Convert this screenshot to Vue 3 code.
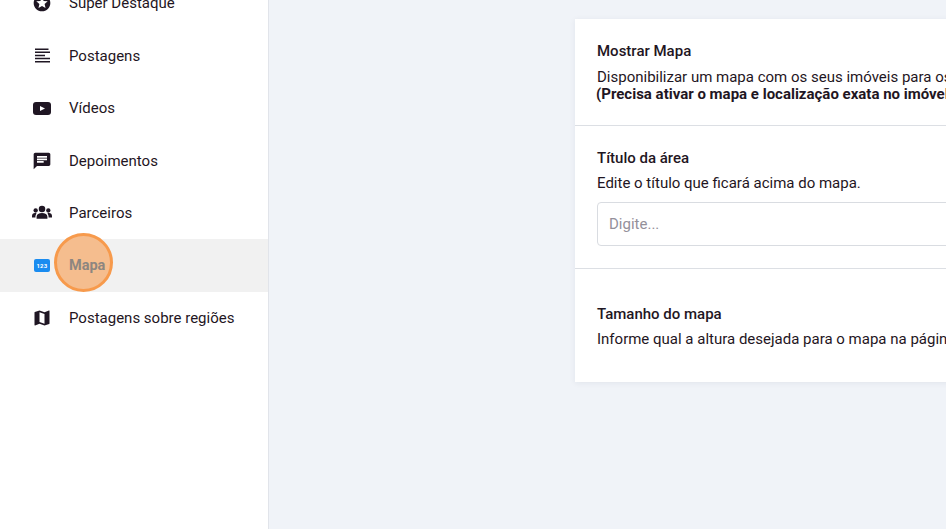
<script setup>
const menu = [
  { label: 'Super Destaque', icon: 'star' },
  { label: 'Postagens', icon: 'notes' },
  { label: 'Vídeos', icon: 'video' },
  { label: 'Depoimentos', icon: 'chat' },
  { label: 'Parceiros', icon: 'users' },
  { label: 'Mapa', icon: 'numbers', active: true },
  { label: 'Postagens sobre regiões', icon: 'map' },
]
</script>

<template>
  <div class="page">
    <aside class="sidebar">
      <ul class="menu">
        <li v-for="item in menu" :key="item.label" class="menu-item" :class="{ active: item.active }">
          <span class="menu-icon">
            <svg v-if="item.icon === 'star'" viewBox="0 0 24 24" width="20" height="20">
              <path d="M11.99 2C6.47 2 2 6.48 2 12s4.47 10 9.99 10C17.52 22 22 17.52 22 12S17.52 2 11.99 2zm4.24 16L12 15.45 7.77 18l1.12-4.81-3.73-3.23 4.92-.42L12 5l1.92 4.53 4.92.42-3.73 3.23L16.23 18z" />
            </svg>
            <svg v-else-if="item.icon === 'notes'" viewBox="0 0 15 15" width="15" height="15">
              <path d="M0 .5h13.500V2H0zM0 3.600h15v1.500H0zM0 6.700h10v1.500H0zM0 9.800h15v1.500H0zM0 12.900h15v1.500H0z" />
            </svg>
            <svg v-else-if="item.icon === 'video'" viewBox="0 0 18 13" width="18" height="13">
              <path d="M3 0h12a3 3 0 0 1 3 3v7a3 3 0 0 1-3 3H3a3 3 0 0 1-3-3V3a3 3 0 0 1 3-3z" />
              <path d="M7 4l5 2.500L7 9z" fill="#fff" />
            </svg>
            <svg v-else-if="item.icon === 'chat'" viewBox="0 0 24 24" width="20" height="20">
              <path d="M20 2H4c-1.100 0-1.990.9-1.990 2L2 22l4-4h14c1.100 0 2-.9 2-2V4c0-1.100-.9-2-2-2zm-6 12H6v-2h8v2zm4-3H6V9h12v2zm0-3H6V6h12v2z" />
            </svg>
            <svg v-else-if="item.icon === 'users'" viewBox="0 0 24 24" width="20" height="20">
              <circle cx="12" cy="7.200" r="3.900" />
              <circle cx="4.400" cy="9" r="2.600" />
              <circle cx="19.600" cy="9" r="2.600" />
              <path d="M5.500 19v-2.500c0-3 2.800-4.500 6.500-4.500s6.500 1.500 6.500 4.500V19zM0 17.500v-2c0-2 1.500-3.500 3.500-3.500.8 0 1.400.1 2 .5-.9 1-1.400 2.200-1.400 3.700v1.300zM24 17.500v-2c0-2-1.500-3.500-3.500-3.500-.8 0-1.400.1-2 .5.900 1 1.400 2.200 1.400 3.700v1.300z" />
            </svg>
            <span v-else-if="item.icon === 'numbers'" class="numbers">123</span>
            <svg v-else viewBox="0 0 24 24" width="20" height="20">
              <path d="M20.500 3l-.16.03L15 5.100 9 3 3.360 4.900c-.21.07-.36.25-.36.48V20.500c0 .28.22.5.5.5l.16-.03L9 18.900l6 2.100 5.640-1.900c.21-.07.36-.25.36-.48V3.500c0-.28-.22-.5-.5-.5zM15 19l-6-2.110V5l6 2.110V19z" />
            </svg>
          </span>
          <span class="menu-label">{{ item.label }}</span>
        </li>
      </ul>
      <span class="click-mark"></span>
    </aside>

    <main class="content">
      <section class="card">
        <div class="field">
          <h3>Mostrar Mapa</h3>
          <p>Disponibilizar um mapa com os seus imóveis para os visitantes do site.</p>
          <p class="strong">(Precisa ativar o mapa e localização exata no imóvel para funcionar)</p>
        </div>
        <div class="field title-field">
          <h3>Título da área</h3>
          <p>Edite o título que ficará acima do mapa.</p>
          <input type="text" placeholder="Digite..." />
        </div>
        <div class="field size-field">
          <h3>Tamanho do mapa</h3>
          <p>Informe qual a altura desejada para o mapa na página do seu site.</p>
        </div>
      </section>
    </main>
  </div>
</template>

<style>
html,
body {
  margin: 0;
  overflow: hidden;
}
</style>

<style scoped>
.page {
  display: flex;
  width: 946px;
  height: 529px;
  overflow: hidden;
  background: #f0f3f8;
  font-family: Roboto, "Liberation Sans", sans-serif;
  color: #1f1623;
}

.sidebar {
  position: relative;
  flex: 0 0 268px;
  background: #fff;
  border-right: 1px solid #e1e4ea;
  overflow: hidden;
}

.menu {
  list-style: none;
  margin: -23.100px 0 0;
  padding: 0;
}

.menu-item {
  display: flex;
  align-items: center;
  height: 52.500px;
  padding-left: 32px;
  font-size: 15px;
}

.menu-item.active {
  background: #f1f1f1;
  font-weight: 700;
}

.menu-item.active .menu-label {
  position: relative;
  z-index: 1;
  color: #8d8680;
  font-size: 14.500px;
}

.menu-icon {
  display: flex;
  align-items: center;
  justify-content: center;
  width: 20px;
  height: 20px;
  margin-right: 17px;
}

.menu-icon svg {
  fill: #1f1623;
}

.numbers {
  display: block;
  width: 16px;
  height: 13px;
  border-radius: 2px;
  background: #1a8cf0;
  color: #fff;
  font-size: 6px;
  font-weight: 700;
  line-height: 13px;
  text-align: center;
  letter-spacing: 0.3px;
}

.click-mark {
  position: absolute;
  left: 54px;
  top: 233px;
  width: 53px;
  height: 53px;
  border: 3px solid #f79a4c;
  border-radius: 50%;
  background: #f5bd8e;
}

.content {
  flex: 1;
  padding: 19px 0 0 306px;
  min-width: 0;
}

.card {
  width: 700px;
  background: #fff;
  box-shadow: 0 1px 6px rgba(30, 40, 70, 0.07);
}

.field {
  padding: 23px 22px 0;
  border-bottom: 1px solid #dcdfe4;
}

.field:first-child {
  height: 83px;
}

.title-field {
  height: 119px;
}

.size-field {
  padding-top: 36px;
  height: 77px;
  border-bottom: 0;
}

h3 {
  margin: 0 0 7px;
  font-size: 15px;
  line-height: 18px;
  font-weight: 500;
}

.field:first-child h3 {
  margin-bottom: 8px;
}

p {
  margin: 0;
  font-size: 15px;
  line-height: 18px;
  white-space: nowrap;
}

.strong {
  margin: -1px 0 0 -1px;
  font-weight: 700;
}

input {
  display: block;
  box-sizing: border-box;
  width: 100%;
  height: 44px;
  margin-top: 10px;
  padding: 0 11px;
  border: 1px solid #d9dce1;
  border-radius: 4px;
  font: inherit;
  font-size: 15px;
  outline: none;
}

input::placeholder {
  color: #94909a;
}
</style>
